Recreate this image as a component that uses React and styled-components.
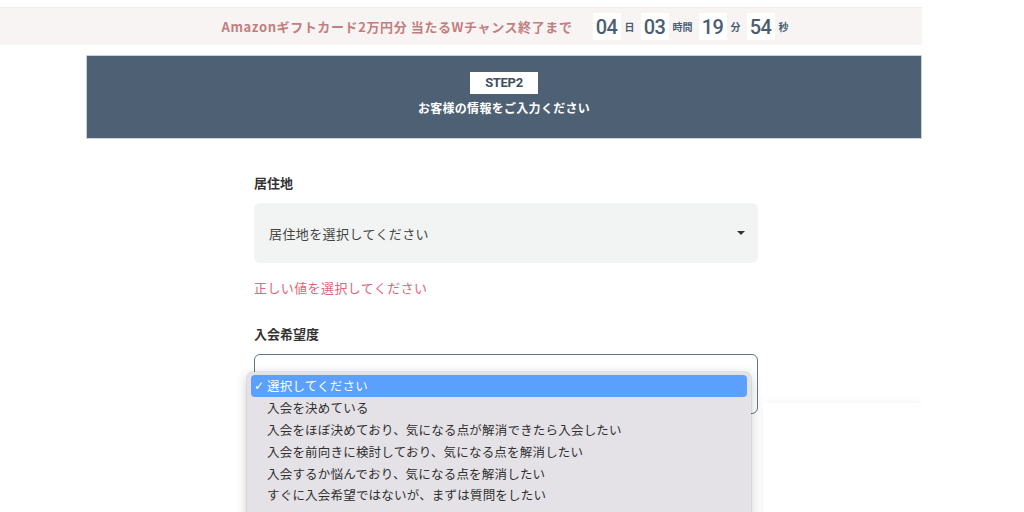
import React from "react";
import styled, { createGlobalStyle } from "styled-components";

const GlobalStyle = createGlobalStyle`
  html, body {
    margin: 0;
    padding: 0;
    background: #fff;
  }
  body {
    font-family: "Noto Sans CJK JP", "Noto Sans", sans-serif;
    color: #333;
  }
`;

const countdown = [
  { value: "04", unit: "日" },
  { value: "03", unit: "時間" },
  { value: "19", unit: "分" },
  { value: "54", unit: "秒" },
];

const options = [
  "選択してください",
  "入会を決めている",
  "入会をほぼ決めており、気になる点が解消できたら入会したい",
  "入会を前向きに検討しており、気になる点を解消したい",
  "入会するか悩んでおり、気になる点を解消したい",
  "すぐに入会希望ではないが、まずは質問をしたい",
];

const App = () => {
  return (
    <>
      <GlobalStyle />
      <Page>
        <TopBar>
          <Campaign>Amazonギフトカード2万円分 当たるWチャンス終了まで</Campaign>
          <Countdown>
            {countdown.map((c) => (
              <CountItem key={c.unit}>
                <Digits>{c.value}</Digits>
                <Unit>{c.unit}</Unit>
              </CountItem>
            ))}
          </Countdown>
        </TopBar>

        <StepBanner>
          <StepBadge>STEP2</StepBadge>
          <StepTitle>お客様の情報をご入力ください</StepTitle>
        </StepBanner>

        <Form>
          <Field>
            <Label>居住地</Label>
            <SelectBox>
              <span>居住地を選択してください</span>
              <Caret />
            </SelectBox>
            <ErrorText>正しい値を選択してください</ErrorText>
          </Field>

          <Field>
            <Label>入会希望度</Label>
            <SelectBox $open>
              <Dropdown>
                {options.map((o, i) => (
                  <Option key={o} $selected={i === 0}>
                    <Check>{i === 0 ? "✓" : ""}</Check>
                    {o}
                  </Option>
                ))}
                <ScrollArrow>⌄</ScrollArrow>
              </Dropdown>
            </SelectBox>
          </Field>
        </Form>

        <Ghost />
      </Page>
    </>
  );
};

const Page = styled.div`
  position: relative;
  width: 922px;
  height: 512px;
  overflow: hidden;
  padding-top: 7px;
  box-sizing: border-box;
`;

const TopBar = styled.div`
  display: flex;
  align-items: center;
  justify-content: center;
  gap: 20px;
  height: 37px;
  padding-left: 90px;
  background: #f9f4f4;
  border-top: 1px solid #ececec;
`;

const Campaign = styled.div`
  font-size: 13px;
  font-weight: 700;
  letter-spacing: 0.6px;
  color: #c27f7f;
`;

const Countdown = styled.div`
  display: flex;
  align-items: center;
  gap: 4px;
`;

const CountItem = styled.div`
  display: flex;
  align-items: center;
  gap: 4px;
`;

const Digits = styled.span`
  display: flex;
  align-items: center;
  justify-content: center;
  width: 28px;
  height: 27px;
  background: #fff;
  font-family: Roboto, "Liberation Sans", sans-serif;
  font-size: 20px;
  font-weight: 500;
  letter-spacing: -0.5px;
  color: #4a5e72;
`;

const Unit = styled.span`
  font-size: 10px;
  font-weight: 700;
  color: #4a5e72;
  margin-right: 2px;
`;

const StepBanner = styled.div`
  margin: 10px 0 0 86px;
  height: 84px;
  box-sizing: border-box;
  background: #4d6074;
  border: 1px solid #c9d2da;
  display: flex;
  flex-direction: column;
  align-items: center;
  padding-top: 16px;
  gap: 5px;
`;

const StepBadge = styled.div`
  background: #fff;
  color: #3f4f5f;
  font-family: Roboto, "Liberation Sans", sans-serif;
  font-size: 13px;
  font-weight: 700;
  letter-spacing: -0.3px;
  width: 68px;
  height: 22px;
  line-height: 22px;
  text-align: center;
`;

const StepTitle = styled.div`
  color: #fff;
  font-size: 12px;
  font-weight: 700;
  letter-spacing: 0.3px;
`;

const Form = styled.div`
  width: 504px;
  margin: 0 0 0 254px;
  padding-top: 35px;
  display: flex;
  flex-direction: column;
  gap: 28px;
`;

const Field = styled.div`
  display: flex;
  flex-direction: column;
`;

const Label = styled.div`
  font-size: 13px;
  font-weight: 700;
  color: #333;
  line-height: 18px;
  margin-bottom: 11px;
`;

const SelectBox = styled.div`
  position: relative;
  height: 60px;
  box-sizing: border-box;
  border-radius: 6px;
  display: flex;
  align-items: center;
  justify-content: space-between;
  padding: 0 12px 0 14px;
  font-size: 13px;
  color: #444;
  letter-spacing: 0.4px;
  background: ${(p) => (p.$open ? "#fff" : "#f2f3f3")};
  border: 1px solid ${(p) => (p.$open ? "#5e7b82" : "#f2f3f3")};
`;

const Caret = styled.span`
  width: 0;
  height: 0;
  border-left: 4px solid transparent;
  border-right: 4px solid transparent;
  border-top: 4px solid #333;
`;

const ErrorText = styled.div`
  margin-top: 15px;
  font-size: 13px;
  color: #e3637c;
  letter-spacing: 0.4px;
`;

const Dropdown = styled.div`
  position: absolute;
  top: 17px;
  left: -8px;
  width: 504px;
  box-sizing: border-box;
  padding: 3px 4px 2px;
  background: #e4e2e6;
  border-radius: 6px;
  box-shadow: 0 3px 12px rgba(0, 0, 0, 0.22), 0 0 0 0.5px rgba(0, 0, 0, 0.12);
  z-index: 2;
`;

const Option = styled.div`
  display: flex;
  align-items: center;
  height: 21.8px;
  border-radius: 4px;
  font-size: 12.5px;
  letter-spacing: 0.2px;
  color: ${(p) => (p.$selected ? "#fff" : "#2f2f2f")};
  background: ${(p) => (p.$selected ? "#5aa0fc" : "transparent")};
`;

const Check = styled.span`
  display: inline-block;
  width: 16px;
  padding-left: 3px;
  box-sizing: border-box;
  font-size: 12px;
  font-weight: 700;
  font-family: "DejaVu Sans", sans-serif;
`;

const ScrollArrow = styled.div`
  height: 22px;
  padding-top: 4px;
  box-sizing: border-box;
  text-align: center;
  font-size: 12px;
  line-height: 14px;
  color: #555;
`;

const Ghost = styled.div`
  position: absolute;
  left: 763px;
  top: 403px;
  width: 159px;
  height: 140px;
  background: #fff;
  box-shadow: 0 0 10px rgba(0, 0, 0, 0.06);
  z-index: 1;
`;

export default App;
